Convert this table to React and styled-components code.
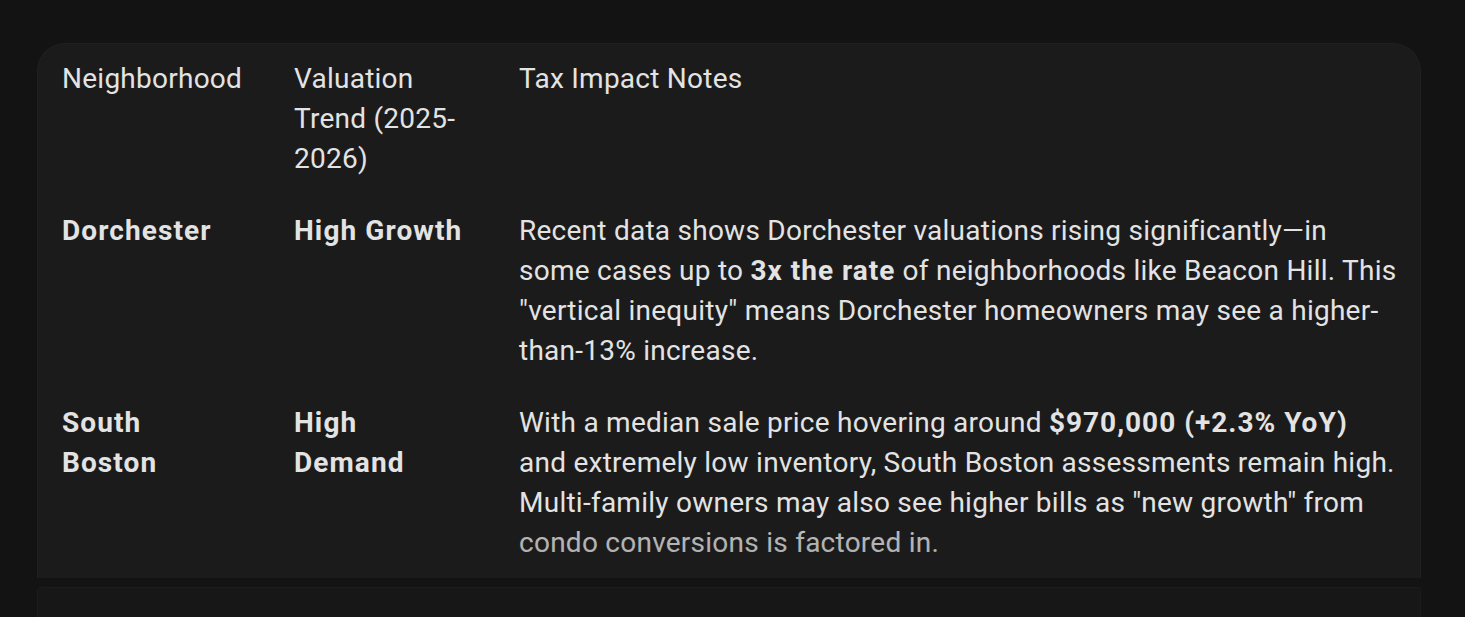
import React from 'react'
import styled, { createGlobalStyle } from 'styled-components'

const GlobalStyle = createGlobalStyle`
  html, body {
    margin: 0;
    padding: 0;
    background: #131313;
  }
  body {
    font-family: Roboto, "Liberation Sans", sans-serif;
    color: #e3e3e3;
    overflow: hidden;
  }
`

// lines are kept as they wrap in the original, since the fallback font measures differently
const rows = [
  {
    name: ['Dorchester'],
    trend: ['High Growth'],
    notes: [
      'Recent data shows Dorchester valuations rising significantly—in',
      <>
        some cases up to <b>3x the rate</b> of neighborhoods like Beacon Hill. This
      </>,
      '"vertical inequity" means Dorchester homeowners may see a higher-',
      'than-13% increase.',
    ],
  },
  {
    name: ['South', 'Boston'],
    trend: ['High', 'Demand'],
    notes: [
      <>
        With a median sale price hovering around <b>$970,000 (+2.3% YoY)</b>
      </>,
      'and extremely low inventory, South Boston assessments remain high.',
      'Multi-family owners may also see higher bills as "new growth" from',
      'condo conversions is factored in.',
    ],
  },
]

const Lines = ({ lines }) =>
  lines.map((line, i) => (
    <React.Fragment key={i}>
      {i > 0 && <br />}
      {line}
    </React.Fragment>
  ))

const App = () => {
  return (
    <Page>
      <GlobalStyle />
      <Card>
        <Table>
          <colgroup>
            <col style={{ width: 232 }} />
            <col style={{ width: 225 }} />
            <col />
          </colgroup>
          <thead>
            <tr>
              <HeadCell>Neighborhood</HeadCell>
              <HeadCell>
                <Lines lines={['Valuation', 'Trend (2025-', '2026)']} />
              </HeadCell>
              <HeadCell>Tax Impact Notes</HeadCell>
            </tr>
          </thead>
          <tbody>
            {rows.map(row => (
              <tr key={row.name.join(' ')}>
                <Cell strong>
                  <Lines lines={row.name} />
                </Cell>
                <Cell strong>
                  <Lines lines={row.trend} />
                </Cell>
                <Cell last>
                  <Lines lines={row.notes} />
                </Cell>
              </tr>
            ))}
          </tbody>
        </Table>
        <Fade />
      </Card>
      <NextPanel />
    </Page>
  )
}

const Page = styled.div`
  display: flex;
  flex-direction: column;
  gap: 9px;
  height: 617px;
  padding: 43px 44px 0 37px;
  box-sizing: border-box;
`

const Card = styled.div`
  position: relative;
  flex: 0 0 535px;
  box-sizing: border-box;
  background: #1b1b1b;
  border: 1px solid #202020;
  border-bottom: none;
  border-radius: 28px 28px 0 0;
  padding: 0 24px 0 24px;
  overflow: hidden;
`

const Table = styled.table`
  width: 100%;
  table-layout: fixed;
  border-collapse: collapse;
  font-size: 28px;
  line-height: 40px;
  letter-spacing: 0.25px;
`

const HeadCell = styled.th`
  text-align: left;
  vertical-align: top;
  font-weight: 400;
  white-space: nowrap;
  padding: 15px 20px 16px 0;
`

const Cell = styled.td`
  vertical-align: top;
  white-space: nowrap;
  padding: 16px ${p => (p.last ? '0' : '20px')} 16px 0;
  font-weight: ${p => (p.strong ? 700 : 400)};
  letter-spacing: ${p => (p.strong ? '1.1px' : 'inherit')};

  b {
    font-weight: 700;
    letter-spacing: 1px;
  }
`

const Fade = styled.div`
  position: absolute;
  left: 0;
  right: 0;
  bottom: 0;
  height: 62px;
  background: linear-gradient(
    to bottom,
    rgba(27, 27, 27, 0) 0,
    rgba(27, 27, 27, 0.22) 18px,
    rgba(27, 27, 27, 0.3) 100%
  );
  pointer-events: none;
`

const NextPanel = styled.div`
  flex: 1 1 auto;
  background: #171717;
  border: 1px solid #1c1c1c;
  border-bottom: none;
  border-radius: 4px 4px 0 0;
`

export default App
